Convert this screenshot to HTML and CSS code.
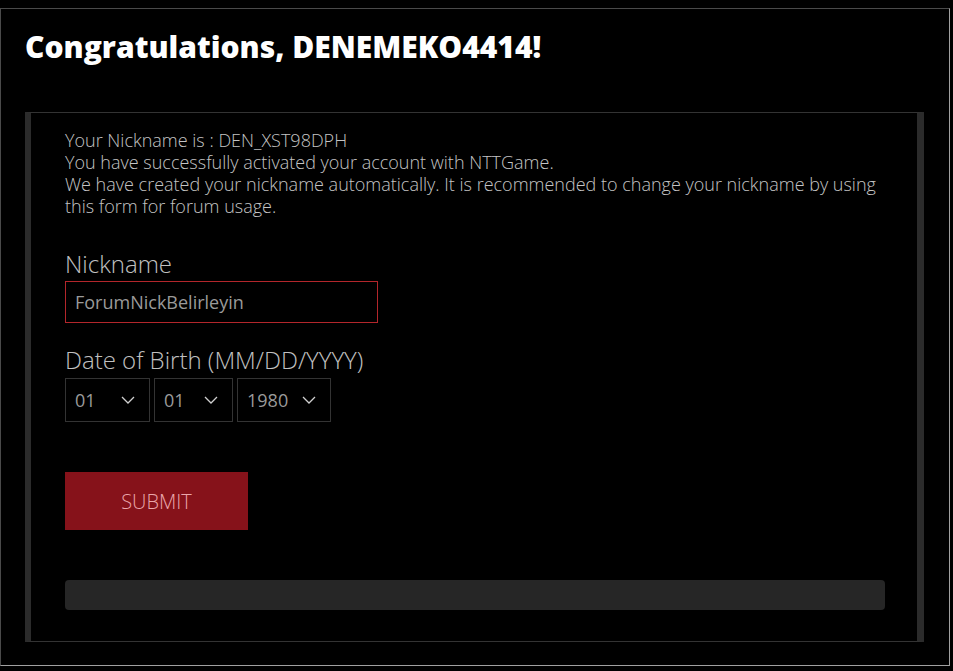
FILE: index.html
```html
<!DOCTYPE html>
<html lang="en">
<head>
    <meta charset="UTF-8">
    <meta name="viewport" content="width=device-width, initial-scale=1.0">
    <title>Account Activated</title>
    <link rel="stylesheet" href="styles.css">
</head>
<body>
    <div class="frame">
        <h1>Congratulations, DENEMEKO4414!</h1>

        <div class="panel">
            <p class="intro">
                Your Nickname is : DEN_XST98DPH<br>
                You have successfully activated your account with NTTGame.<br>
                We have created your nickname automatically. It is recommended to change your nickname by using this form for forum usage.
            </p>

            <form class="nick-form" onsubmit="return false;">
                <label class="field-label" for="nickname">Nickname</label>
                <input class="nick-input" id="nickname" type="text" value="ForumNickBelirleyin">

                <div class="field-label dob-label">Date of Birth (MM/DD/YYYY)</div>
                <div class="dob-row">
                    <div class="dob-select month">
                        <span>01</span>
                        <svg class="chevron" width="14" height="8" viewBox="0 0 14 8"><path d="M1 1l6 6 6-6" fill="none" stroke="#d0d0d0" stroke-width="1.3"/></svg>
                    </div>
                    <div class="dob-select day">
                        <span>01</span>
                        <svg class="chevron" width="14" height="8" viewBox="0 0 14 8"><path d="M1 1l6 6 6-6" fill="none" stroke="#d0d0d0" stroke-width="1.3"/></svg>
                    </div>
                    <div class="dob-select year">
                        <span>1980</span>
                        <svg class="chevron" width="14" height="8" viewBox="0 0 14 8"><path d="M1 1l6 6 6-6" fill="none" stroke="#d0d0d0" stroke-width="1.3"/></svg>
                    </div>
                </div>

                <button class="submit-btn" type="submit">SUBMIT</button>
            </form>

            <div class="status-bar"></div>
        </div>
    </div>
</body>
</html>
```

FILE: styles.css
```css
body {
    margin: 0;
    background-color: #000;
    font-family: 'Open Sans', 'Noto Sans', sans-serif;
    color: #c4c4c4;
}
.frame {
    margin: 8px 3px 0 0;
    height: 658px;
    box-sizing: border-box;
    border: 1px solid;
    border-color: #4a4a4a #a0a0a0 #a0a0a0 #4a4a4a;
    padding: 0 25px 0 24px;
}
h1 {
    margin: 0;
    padding-top: 19px;
    height: 103px;
    box-sizing: border-box;
    font-size: 30px;
    font-weight: 800;
    line-height: 38px;
    color: #fff;
}
.panel {
    height: 530px;
    box-sizing: border-box;
    border-top: 1px solid #333;
    border-bottom: 1px solid #333;
    border-left: 6px solid #2b2b2b;
    border-right: 7px solid #2b2b2b;
    padding: 16px 32px 0 34px;
}
.intro {
    margin: 0;
    font-size: 18px;
    font-weight: 300;
    line-height: 22px;
}
.nick-form {
    display: flex;
    flex-direction: column;
    align-items: flex-start;
}
.field-label {
    margin-top: 32px;
    font-size: 24px;
    font-weight: 300;
    line-height: 30px;
    color: #c0c0c0;
}
.dob-label {
    margin-top: 22px;
}
.nick-input {
    margin-top: 2px;
    width: 313px;
    height: 42px;
    box-sizing: border-box;
    background: #000;
    border: 1px solid #b3262b;
    padding: 0 9px;
    font-family: inherit;
    font-size: 18px;
    color: #9a9a9a;
    outline: none;
}
.dob-row {
    display: flex;
    gap: 4px;
    margin-top: 3px;
}
.dob-select {
    display: flex;
    align-items: center;
    justify-content: space-between;
    height: 44px;
    box-sizing: border-box;
    border: 1px solid #333;
    padding: 0 14px 0 9px;
    font-size: 18px;
    color: #9a9a9a;
}
.month { width: 85px; }
.day { width: 79px; }
.year { width: 94px; }
.submit-btn {
    margin-top: 50px;
    width: 183px;
    height: 58px;
    background-color: #86121a;
    border: none;
    font-family: inherit;
    font-size: 20px;
    font-weight: 300;
    color: #eaa6aa;
    cursor: pointer;
}
.status-bar {
    margin-top: 50px;
    height: 30px;
    border-radius: 4px;
    background-color: #262626;
}
```
